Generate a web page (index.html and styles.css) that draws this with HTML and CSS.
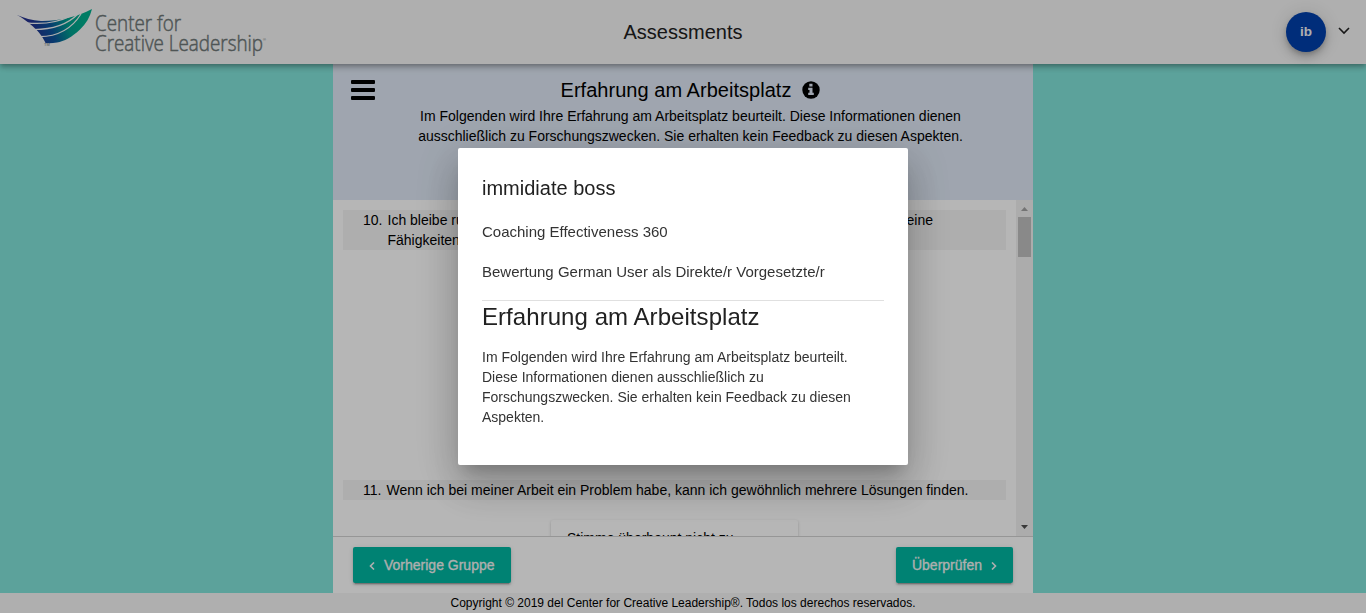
FILE: index.html
```html
<!DOCTYPE html>
<html lang="de">
<head>
<meta charset="utf-8">
<title>Assessments</title>
<link rel="stylesheet" href="styles.css">
</head>
<body>
<div class="app">
  <header class="toolbar">
    <svg class="logo" viewBox="0 0 260 56" role="img" aria-label="Center for Creative Leadership">
      <defs>
        <linearGradient id="wing" gradientUnits="userSpaceOnUse" x1="22" y1="30" x2="70" y2="14">
          <stop offset="0" stop-color="#24328f"/>
          <stop offset=".35" stop-color="#0b549c"/>
          <stop offset=".7" stop-color="#00a08e"/>
          <stop offset="1" stop-color="#00ae8c"/>
        </linearGradient>
      </defs>
      <path fill="url(#wing)" d="M5.500 14.800C13 18 21 20.700 30 20.900C46 21.200 66 17.500 81 9C79 17 75 24 69 29.500C61 37 53 41.500 46 42.500Q40 43.500 34.500 43C32.500 38 27 30.500 24 28.500C19 23.500 12 18 5.500 14.800Z"/>
      <g class="logo-gaps">
        <path d="M15 22.800C30 24.500 47 22.500 61 15.500"/>
        <path d="M23 29.500C40 29.500 56 25 67 14"/>
        <path d="M28.500 36.700C45 36.500 60 30 70 14"/>
      </g>
      <text class="logo-text" x="84" y="31" textLength="86" lengthAdjust="spacingAndGlyphs">Center for</text>
      <text class="logo-text" x="84" y="51" textLength="168" lengthAdjust="spacingAndGlyphs">Creative Leadership</text>
      <text class="logo-mark" x="33" y="46">TM</text>
      <text class="logo-mark" x="252" y="41">®</text>
    </svg>
    <h1 class="toolbar-title">Assessments</h1>
    <div class="account">
      <span class="avatar">ib</span>
      <svg class="account-arrow" viewBox="0 0 12 8"><path d="M1 1l5 5 5-5"/></svg>
    </div>
  </header>
  <main class="column">
    <section class="intro">
      <svg class="menu" viewBox="0 0 24 20"><path d="M1 0h22q1 0 1 1v2q0 1-1 1H1q-1 0-1-1V1q0-1 1-1zM1 8h22q1 0 1 1v2q0 1-1 1H1q-1 0-1-1V9q0-1 1-1zM1 16h22q1 0 1 1v2q0 1-1 1H1q-1 0-1-1v-2q0-1 1-1z"/></svg>
      <div class="intro-body">
        <h2 class="intro-title">Erfahrung am Arbeitsplatz
          <svg class="info" viewBox="0 0 18 18"><circle cx="9" cy="9" r="8.700"/><path d="M7.300 2.700h3.200v2.700H7.300zM6.200 6.700h4.300v5h1.300v2.200H6.200v-2.200h1.300V8.900H6.200z"/></svg>
        </h2>
        <p class="intro-text">Im Folgenden wird Ihre Erfahrung am Arbeitsplatz beurteilt. Diese Informationen dienen ausschließlich zu Forschungszwecken. Sie erhalten kein Feedback zu diesen Aspekten.</p>
      </div>
    </section>
    <section class="questions">
      <div class="question-list">
        <div class="question question-tall">
          <span class="number">10.</span>
          <span class="question-text question-split"><span>Ich bleibe ruhig und<br>Fähigkeiten</span><span>eine</span></span>
        </div>
        <div class="question">
          <span class="number number-narrow">11.</span>
          <span class="question-text">Wenn ich bei meiner Arbeit ein Problem habe, kann ich gewöhnlich mehrere Lösungen finden.</span>
        </div>
        <div class="answer">Stimme überhaupt nicht zu</div>
      </div>
      <div class="scrollbar">
        <svg class="scroll-arrow arrow-up" viewBox="0 0 7 4"><path d="M0 4L3.500 0 7 4z"/></svg>
        <span class="thumb"></span>
        <svg class="scroll-arrow arrow-down" viewBox="0 0 7 4"><path d="M0 0h7L3.500 4z"/></svg>
      </div>
    </section>
    <nav class="actions">
      <button class="button"><svg class="chevron" viewBox="0 0 6 8"><path d="M5 .5L1.500 4 5 7.500"/></svg>Vorherige Gruppe</button>
      <button class="button">Überprüfen<svg class="chevron" viewBox="0 0 6 8"><path d="M1 .5L4.500 4 1 7.500"/></svg></button>
    </nav>
  </main>
  <footer class="footer">Copyright © 2019 del Center for Creative Leadership®. Todos los derechos reservados.</footer>
</div>
<div class="backdrop">
  <div class="dialog" role="dialog">
    <h2 class="dialog-title">immidiate boss</h2>
    <p class="dialog-line">Coaching Effectiveness 360</p>
    <p class="dialog-line">Bewertung German User als Direkte/r Vorgesetzte/r</p>
    <hr class="divider">
    <h3 class="dialog-heading">Erfahrung am Arbeitsplatz</h3>
    <p class="dialog-text">Im Folgenden wird Ihre Erfahrung am Arbeitsplatz beurteilt. Diese Informationen dienen ausschließlich zu Forschungszwecken. Sie erhalten kein Feedback zu diesen Aspekten.</p>
  </div>
</div>
</body>
</html>
```
FILE: styles.css
```css
* { box-sizing: border-box; }
body {
  margin: 0;
  font: 14px/20px "Liberation Sans", Arial, sans-serif;
  color: #000;
  overflow: hidden;
}
h1, h2, h3, p { margin: 0; font-weight: 400; }
.app {
  height: 613px;
  display: flex;
  flex-direction: column;
  align-items: center;
  background: #82e4da;
}
.toolbar {
  z-index: 1;
  flex: none;
  width: 100%;
  height: 64px;
  padding: 0 16px 0 11px;
  display: grid;
  grid-template-columns: 1fr auto 1fr;
  align-items: center;
  background: #f5f5f5;
  box-shadow: 0 2px 4px -1px rgba(0,0,0,.2), 0 4px 5px rgba(0,0,0,.14), 0 1px 10px rgba(0,0,0,.12);
}
.logo { width: 260px; height: 56px; align-self: start; }
.logo-gaps { fill: none; stroke: #f5f5f5; stroke-width: 1.2; }
.logo-text { font: 300 22px "Open Sans", sans-serif; fill: #6f7878; stroke: #6f7878; stroke-width: .5; }
.logo-mark { font: 4px "Liberation Sans", sans-serif; fill: #6f7878; }
.toolbar-title { font-size: 20px; line-height: 32px; color: #212121; margin-left: 5px; }
.account { display: flex; align-items: center; justify-content: flex-end; gap: 12px; }
.avatar {
  width: 40px;
  height: 40px;
  border-radius: 50%;
  background: #003fac;
  color: #f5f5f5;
  font-size: 13.500px;
  font-weight: 700;
  line-height: 40px;
  text-align: center;
  box-shadow: 0 3px 5px -1px rgba(0,0,0,.2), 0 6px 10px rgba(0,0,0,.14), 0 1px 18px rgba(0,0,0,.12);
}
.account-arrow { width: 12px; height: 8px; margin-bottom: 3px; }
.account-arrow path { fill: none; stroke: #222; stroke-width: 1.6; }
.column {
  width: 700px;
  flex: 1;
  min-height: 0;
  display: flex;
  flex-direction: column;
  background: #fff;
}
.intro {
  height: 136px;
  flex: none;
  display: flex;
  padding: 16px 18px 0;
  background: #dfe8f5;
}
.menu { width: 24px; height: 20px; flex: none; }
.intro-body { flex: 1; padding: 0 29px 0 20px; text-align: center; }
.intro-title {
  display: flex;
  align-items: center;
  justify-content: center;
  gap: 11px;
  font-size: 20px;
  line-height: 20px;
  letter-spacing: .03px;
  padding-bottom: 6px;
}
.info { width: 18px; height: 18px; }
.info path { fill: #dfe8f5; }
.intro-text { width: 560px; margin: 0 auto; }
.questions { flex: 1; min-height: 0; display: flex; overflow: hidden; }
.question-list { flex: 1; padding: 10px 10px 0; }
.question { display: flex; gap: 5px; padding-left: 20px; background: #f4f4f4; }
.question-tall { margin-bottom: 230px; }
.number { width: 19.500px; flex: none; }
.number-narrow { width: 18.500px; }
.question-text { white-space: nowrap; flex: 1; }
.question-split { display: flex; justify-content: space-between; padding-right: 73px; }
.answer {
  width: 247px;
  height: 40px;
  margin: 20px auto 0;
  padding: 8px 16px;
  background: #fff;
  border-radius: 2px;
  box-shadow: 0 1px 3px rgba(0,0,0,.22);
}
.scrollbar {
  width: 17px;
  display: flex;
  flex-direction: column;
  align-items: center;
  background: #f1f1f1;
}
.scroll-arrow { width: 7px; height: 4px; flex: none; }
.arrow-up { margin: 7px 0 6px; fill: #a3a3a3; }
.arrow-down { margin: auto 0 7px; fill: #505050; }
.thumb { width: 13px; height: 40px; background: #c1c1c1; }
.actions {
  height: 57px;
  flex: none;
  padding: 10px 20px;
  display: flex;
  justify-content: space-between;
  border-top: 1px solid #d2d2d2;
}
.button {
  height: 36px;
  border: 0;
  border-radius: 2px;
  padding: 0 16px;
  display: flex;
  align-items: center;
  gap: 9px;
  background: #00b7a2;
  color: #f5f5f5;
  font: 14px/36px "Liberation Sans", Arial, sans-serif;
  -webkit-text-stroke: .3px #f5f5f5;
  box-shadow: 0 3px 1px -2px rgba(0,0,0,.2), 0 2px 2px rgba(0,0,0,.14), 0 1px 5px rgba(0,0,0,.12);
}
.chevron { width: 6px; height: 8px; margin-top: 1px; }
.chevron path { fill: none; stroke: #f5f5f5; stroke-width: 1.6; }
.footer { width: 100%; height: 20px; flex: none; background: #f5f5f5; font-size: 12px; text-align: center; }
.backdrop {
  position: fixed;
  inset: 0;
  z-index: 2;
  display: flex;
  align-items: center;
  justify-content: center;
  background: rgba(0,0,0,.288);
}
.dialog {
  width: 450px;
  height: 317px;
  padding: 24px;
  background: #fff;
  border-radius: 2px;
  color: #212121;
  box-shadow: 0 11px 15px -7px rgba(0,0,0,.2), 0 24px 38px 3px rgba(0,0,0,.14), 0 9px 46px 8px rgba(0,0,0,.12);
}
.dialog-title { font-size: 20px; line-height: 32px; margin-bottom: 16px; }
.dialog-line { font-size: 15px; line-height: 24px; margin-bottom: 16px; color: #333; }
.divider { border: 0; border-top: 1px solid #e0e0e0; margin: 0; }
.dialog-heading { font-size: 24px; line-height: 32px; letter-spacing: .06px; margin-bottom: 14px; }
.dialog-text { color: #333; }
```
